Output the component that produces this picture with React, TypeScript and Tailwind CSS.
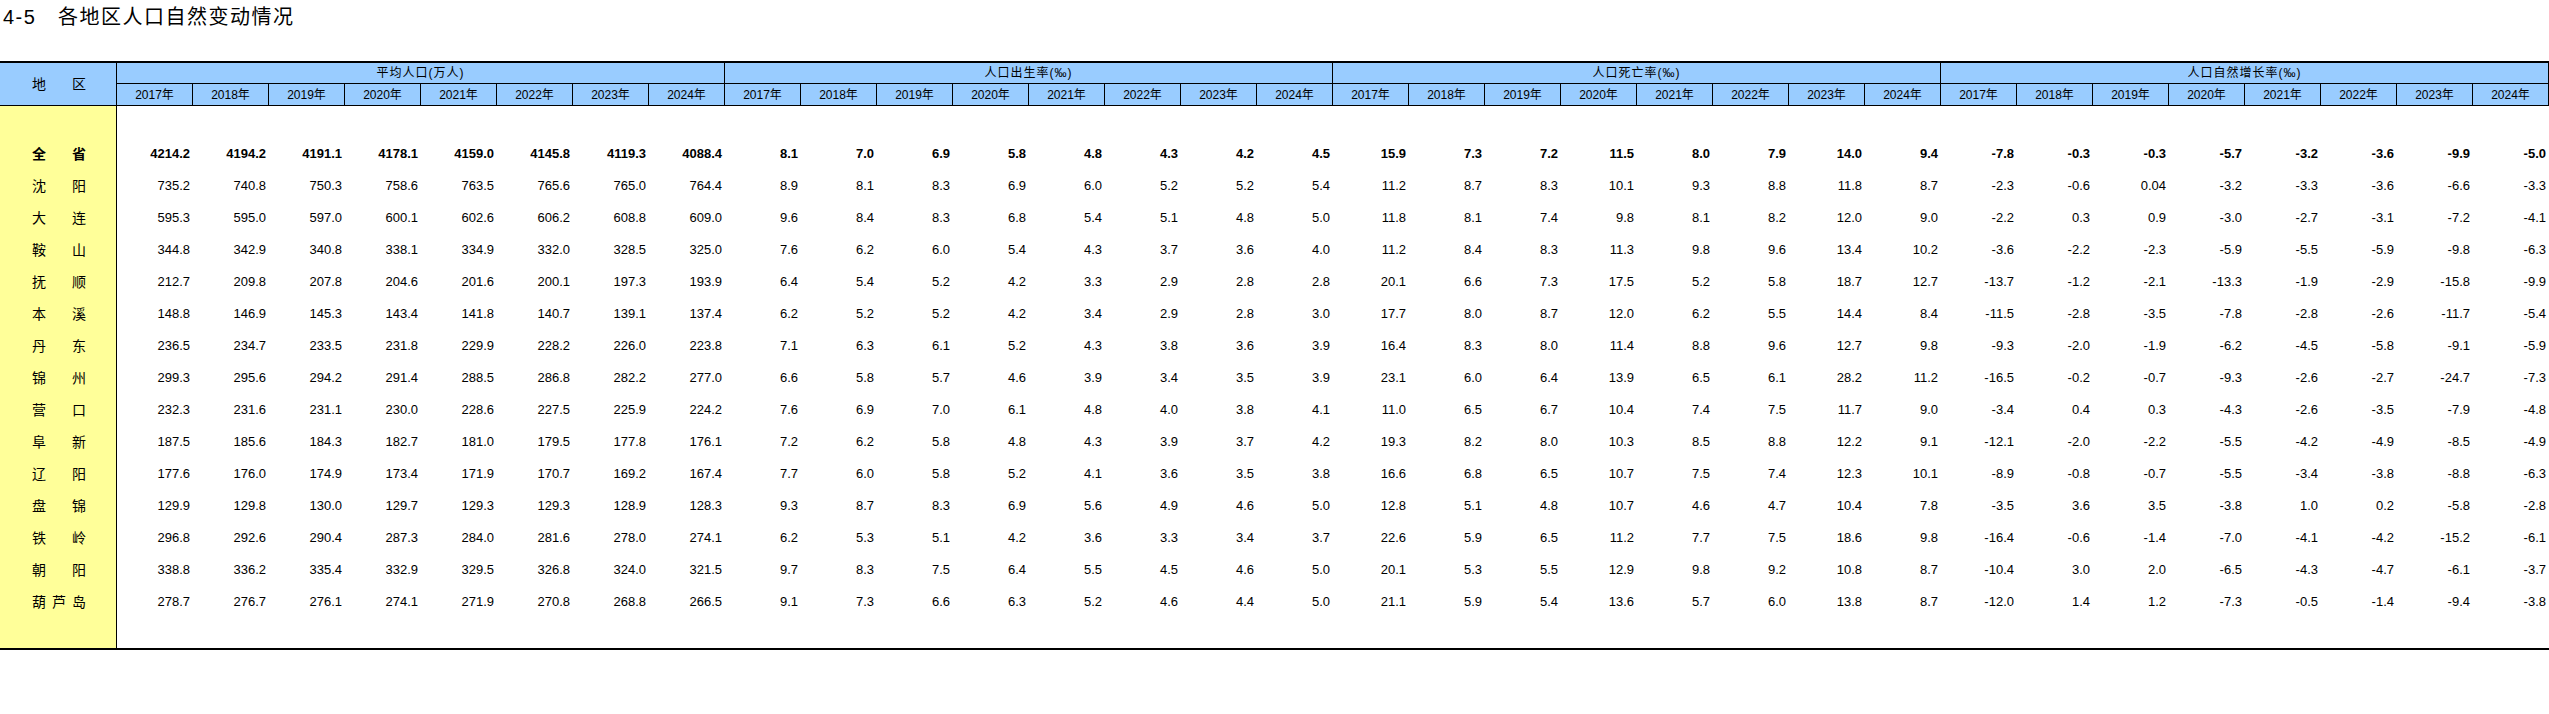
const groups = ['平均人口(万人)', '人口出生率(‰)', '人口死亡率(‰)', '人口自然增长率(‰)'];
const years = ['2017年', '2018年', '2019年', '2020年', '2021年', '2022年', '2023年', '2024年'];

// region, then 4 groups x 8 years
const rows: [string, string][] = [
  ['全省', '4214.2 4194.2 4191.1 4178.1 4159.0 4145.8 4119.3 4088.4 8.1 7.0 6.9 5.8 4.8 4.3 4.2 4.5 15.9 7.3 7.2 11.5 8.0 7.9 14.0 9.4 -7.8 -0.3 -0.3 -5.7 -3.2 -3.6 -9.9 -5.0'],
  ['沈阳', '735.2 740.8 750.3 758.6 763.5 765.6 765.0 764.4 8.9 8.1 8.3 6.9 6.0 5.2 5.2 5.4 11.2 8.7 8.3 10.1 9.3 8.8 11.8 8.7 -2.3 -0.6 0.04 -3.2 -3.3 -3.6 -6.6 -3.3'],
  ['大连', '595.3 595.0 597.0 600.1 602.6 606.2 608.8 609.0 9.6 8.4 8.3 6.8 5.4 5.1 4.8 5.0 11.8 8.1 7.4 9.8 8.1 8.2 12.0 9.0 -2.2 0.3 0.9 -3.0 -2.7 -3.1 -7.2 -4.1'],
  ['鞍山', '344.8 342.9 340.8 338.1 334.9 332.0 328.5 325.0 7.6 6.2 6.0 5.4 4.3 3.7 3.6 4.0 11.2 8.4 8.3 11.3 9.8 9.6 13.4 10.2 -3.6 -2.2 -2.3 -5.9 -5.5 -5.9 -9.8 -6.3'],
  ['抚顺', '212.7 209.8 207.8 204.6 201.6 200.1 197.3 193.9 6.4 5.4 5.2 4.2 3.3 2.9 2.8 2.8 20.1 6.6 7.3 17.5 5.2 5.8 18.7 12.7 -13.7 -1.2 -2.1 -13.3 -1.9 -2.9 -15.8 -9.9'],
  ['本溪', '148.8 146.9 145.3 143.4 141.8 140.7 139.1 137.4 6.2 5.2 5.2 4.2 3.4 2.9 2.8 3.0 17.7 8.0 8.7 12.0 6.2 5.5 14.4 8.4 -11.5 -2.8 -3.5 -7.8 -2.8 -2.6 -11.7 -5.4'],
  ['丹东', '236.5 234.7 233.5 231.8 229.9 228.2 226.0 223.8 7.1 6.3 6.1 5.2 4.3 3.8 3.6 3.9 16.4 8.3 8.0 11.4 8.8 9.6 12.7 9.8 -9.3 -2.0 -1.9 -6.2 -4.5 -5.8 -9.1 -5.9'],
  ['锦州', '299.3 295.6 294.2 291.4 288.5 286.8 282.2 277.0 6.6 5.8 5.7 4.6 3.9 3.4 3.5 3.9 23.1 6.0 6.4 13.9 6.5 6.1 28.2 11.2 -16.5 -0.2 -0.7 -9.3 -2.6 -2.7 -24.7 -7.3'],
  ['营口', '232.3 231.6 231.1 230.0 228.6 227.5 225.9 224.2 7.6 6.9 7.0 6.1 4.8 4.0 3.8 4.1 11.0 6.5 6.7 10.4 7.4 7.5 11.7 9.0 -3.4 0.4 0.3 -4.3 -2.6 -3.5 -7.9 -4.8'],
  ['阜新', '187.5 185.6 184.3 182.7 181.0 179.5 177.8 176.1 7.2 6.2 5.8 4.8 4.3 3.9 3.7 4.2 19.3 8.2 8.0 10.3 8.5 8.8 12.2 9.1 -12.1 -2.0 -2.2 -5.5 -4.2 -4.9 -8.5 -4.9'],
  ['辽阳', '177.6 176.0 174.9 173.4 171.9 170.7 169.2 167.4 7.7 6.0 5.8 5.2 4.1 3.6 3.5 3.8 16.6 6.8 6.5 10.7 7.5 7.4 12.3 10.1 -8.9 -0.8 -0.7 -5.5 -3.4 -3.8 -8.8 -6.3'],
  ['盘锦', '129.9 129.8 130.0 129.7 129.3 129.3 128.9 128.3 9.3 8.7 8.3 6.9 5.6 4.9 4.6 5.0 12.8 5.1 4.8 10.7 4.6 4.7 10.4 7.8 -3.5 3.6 3.5 -3.8 1.0 0.2 -5.8 -2.8'],
  ['铁岭', '296.8 292.6 290.4 287.3 284.0 281.6 278.0 274.1 6.2 5.3 5.1 4.2 3.6 3.3 3.4 3.7 22.6 5.9 6.5 11.2 7.7 7.5 18.6 9.8 -16.4 -0.6 -1.4 -7.0 -4.1 -4.2 -15.2 -6.1'],
  ['朝阳', '338.8 336.2 335.4 332.9 329.5 326.8 324.0 321.5 9.7 8.3 7.5 6.4 5.5 4.5 4.6 5.0 20.1 5.3 5.5 12.9 9.8 9.2 10.8 8.7 -10.4 3.0 2.0 -6.5 -4.3 -4.7 -6.1 -3.7'],
  ['葫芦岛', '278.7 276.7 276.1 274.1 271.9 270.8 268.8 266.5 9.1 7.3 6.6 6.3 5.2 4.6 4.4 5.0 21.1 5.9 5.4 13.6 5.7 6.0 13.8 8.7 -12.0 1.4 1.2 -7.3 -0.5 -1.4 -9.4 -3.8'],
];

function RegionName({ name, bold }: { name: string; bold?: boolean }) {
  return (
    <div className={`ml-[32px] flex w-[54px] justify-between text-[14px] ${bold ? 'font-bold' : ''}`}>
      {name.split('').map((ch, i) => (
        <span key={i}>{ch}</span>
      ))}
    </div>
  );
}

export default function App() {
  return (
    <div className="w-[2549px] bg-white text-black font-['Liberation_Sans','Noto_Sans_CJK_SC',sans-serif]">
      <div className="h-[61px] pl-[3px] pt-[4px] text-[20px] leading-[26px] tracking-[1.5px]">
        4-5　各地区人口自然变动情况
      </div>

      {/* header */}
      <div className="grid grid-cols-[117px_repeat(32,76px)] grid-rows-[21px_22px] border-t-2 border-black bg-[#99ccff]">
        <div className="row-span-2 flex items-center border-r border-b border-black">
          <RegionName name="地区" />
        </div>
        {groups.map((g) => (
          <div
            key={g}
            className="col-span-8 flex items-center justify-center border-r border-b border-black text-[12px] tracking-[1px]"
          >
            {g}
          </div>
        ))}
        {groups.map((g) =>
          years.map((y) => (
            <div
              key={g + y}
              className="flex items-center justify-center border-r border-b border-black pt-[1px] text-[12px]"
            >
              {y}
            </div>
          ))
        )}
      </div>

      {/* body */}
      <div className="border-b-2 border-black">
        <div className="grid h-[32px] grid-cols-[117px_1fr]">
          <div className="border-r border-black bg-[#ffff99]" />
          <div />
        </div>
        {rows.map(([name, values], idx) => (
          <div key={name} className="grid h-[32px] grid-cols-[117px_repeat(32,76px)] items-center">
            <div className="flex h-full items-center border-r border-black bg-[#ffff99]">
              <RegionName name={name} bold={idx === 0} />
            </div>
            {values.split(' ').map((v, i) => (
              <div
                key={i}
                className={`pr-[3px] text-right font-['Liberation_Sans',Arial,sans-serif] text-[13px] ${idx === 0 ? 'font-bold' : ''}`}
              >
                {v}
              </div>
            ))}
          </div>
        ))}
        <div className="grid h-[30px] grid-cols-[117px_1fr]">
          <div className="border-r border-black bg-[#ffff99]" />
          <div />
        </div>
      </div>
      <div className="h-[63px]" />
    </div>
  );
}
